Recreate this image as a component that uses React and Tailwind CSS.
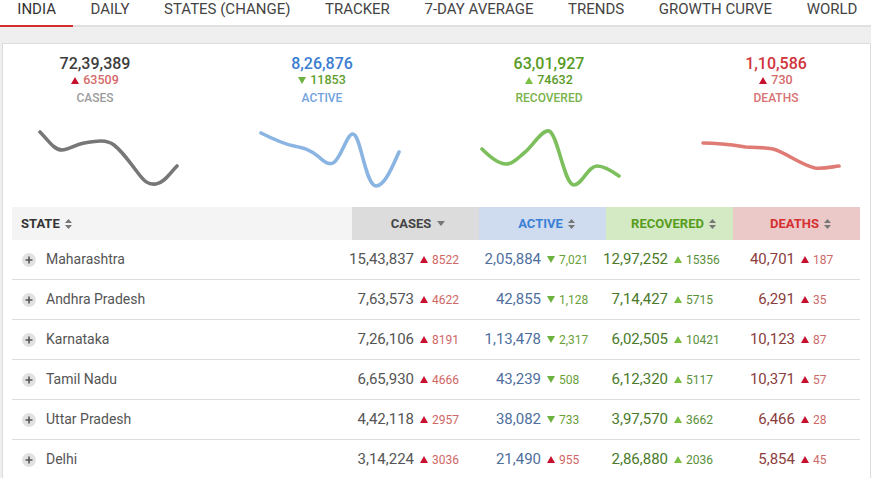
import React from 'react';

const tabs = ['INDIA', 'DAILY', 'STATES (CHANGE)', 'TRACKER', '7-DAY AVERAGE', 'TRENDS', 'GROWTH CURVE', 'WORLD'];

const summary = [
  { value: '72,39,389', delta: '63509', dir: 'up', label: 'CASES', num: 'text-[#3d3d3d]', tri: '#c8102e', dnum: 'text-[#d46a6a]', lab: 'text-[#9c9c9c]' },
  { value: '8,26,876', delta: '11853', dir: 'down', label: 'ACTIVE', num: 'text-[#3b7dd0]', tri: '#6cb33e', dnum: 'text-[#5f9e2c]', lab: 'text-[#72a2dc]' },
  { value: '63,01,927', delta: '74632', dir: 'up', label: 'RECOVERED', num: 'text-[#579a24]', tri: '#7ac143', dnum: 'text-[#5a9a2a]', lab: 'text-[#79b34a]' },
  { value: '1,10,586', delta: '730', dir: 'up', label: 'DEATHS', num: 'text-[#d1343b]', tri: '#c8102e', dnum: 'text-[#d46a6a]', lab: 'text-[#d87272]' }
];

const charts = [
  { color: '#777777', d: 'M2 7 C 10 15, 16 25, 24 25 C 30 25, 36 20, 46 18 C 58 16, 68 14, 76 20 C 86 28, 92 38, 100 48 C 106 56, 110 60, 118 59 C 126 58, 132 48, 139 41' },
  { color: '#8ab4e2', d: 'M2 8 C 12 13, 24 19, 35 21 C 45 23, 52 25, 60 32 C 66 38, 70 40, 74 38 C 82 34, 88 8, 94 9 C 102 10, 106 60, 117 61 C 126 61, 134 40, 140 27' },
  { color: '#7cbf5c', d: 'M2 24 C 8 30, 18 39, 26 39 C 33 39, 38 33, 44 28 C 52 22, 62 4, 69 6 C 78 9, 84 60, 94 60 C 102 60, 108 41, 117 41 C 124 41, 132 46, 139 51' },
  { color: '#e07a74', d: 'M2 18 C 20 18, 32 20, 45 22 C 55 23, 62 22, 72 24 C 84 27, 100 40, 114 43 C 122 44, 130 42, 138 41' }
];

const rows = [
  ['Maharashtra', '15,43,837', '8522', '2,05,884', '7,021', 'down', '12,97,252', '15356', '40,701', '187'],
  ['Andhra Pradesh', '7,63,573', '4622', '42,855', '1,128', 'down', '7,14,427', '5715', '6,291', '35'],
  ['Karnataka', '7,26,106', '8191', '1,13,478', '2,317', 'down', '6,02,505', '10421', '10,123', '87'],
  ['Tamil Nadu', '6,65,930', '4666', '43,239', '508', 'down', '6,12,320', '5117', '10,371', '57'],
  ['Uttar Pradesh', '4,42,118', '2957', '38,082', '733', 'down', '3,97,570', '3662', '6,466', '28'],
  ['Delhi', '3,14,224', '3036', '21,490', '955', 'up', '2,86,880', '2036', '5,854', '45']
];

function Tri({ dir, color, size = 8 }) {
  return (
    <svg width={size} height={size - 1} viewBox="0 0 8 7" className="shrink-0">
      {dir === 'up' ? <polygon points="4,0 8,7 0,7" fill={color} /> : <polygon points="0,0 8,0 4,7" fill={color} />}
    </svg>
  );
}

function SortIcon() {
  return (
    <svg width="7" height="10" viewBox="0 0 7 10" className="ml-[5px]">
      <polygon points="3.5,0 7,4 0,4" fill="#777" />
      <polygon points="0,6 7,6 3.5,10" fill="#777" />
    </svg>
  );
}

function NumCell({ value, delta, dir, numClass, triColor, deltaClass }) {
  return (
    <div className="flex items-center h-full">
      <div className={`w-[62px] shrink-0 flex justify-end whitespace-nowrap text-[15px] ${numClass}`}>{value}</div>
      <div className="flex items-center ml-[6px] whitespace-nowrap">
        <Tri dir={dir} color={triColor} />
        <span className={`ml-[4px] text-[12px] ${deltaClass}`}>{delta}</span>
      </div>
    </div>
  );
}

export default function App() {
  return (
    <div className="w-[874px] h-[478px] overflow-hidden bg-white" style={{ fontFamily: 'Roboto, "Liberation Sans", sans-serif' }}>
      {/* tabs */}
      <div className="flex w-[871px] border-b-2 border-[#e0e0e0]">
        {tabs.map((t, i) => (
          <div
            key={t}
            className={`-mb-[2px] px-[17.3px] pb-[7px] text-[15px] leading-[18px] whitespace-nowrap border-b-2 ${i === 0 ? 'border-[#d32f2f] text-[#333]' : 'border-transparent text-[#444]'}`}
          >
            {t}
          </div>
        ))}
      </div>

      <div className="w-[871px] bg-[#efefef] pl-[2px] pt-[16px]">
        <div className="w-[869px] bg-white border-t border-l border-r border-[#dddddd] h-[440px]">
          {/* summary */}
          <div className="grid grid-cols-[160px_160px_160px_160px] gap-x-[67px] pl-[12px] pt-[11px]">
            {summary.map((s) => (
              <div key={s.label} className="flex flex-col items-center">
                <div className={`text-[16px] leading-[18px] font-medium ${s.num}`}>{s.value}</div>
                <div className="flex items-center h-[14px]">
                  <Tri dir={s.dir} color={s.tri} />
                  <span className={`ml-[4px] text-[12.5px] font-medium ${s.dnum}`}>{s.delta}</span>
                </div>
                <div className={`mt-[3px] text-[12px] leading-[16px] font-medium ${s.lab}`}>{s.label}</div>
              </div>
            ))}
          </div>

          {/* sparklines */}
          <div className="flex gap-x-[76px] pl-[35px] mt-[19px]">
            {charts.map((c, i) => (
              <svg key={i} width="145" height="65" viewBox="0 0 145 65">
                <path d={c.d} fill="none" stroke={c.color} strokeWidth="3.6" strokeLinecap="round" strokeLinejoin="round" />
              </svg>
            ))}
          </div>

          {/* table */}
          <div className="ml-[9px] mt-[17px] w-[848px]">
            <div className="grid grid-cols-[340px_127px_127px_127px_127px] h-[33px] text-[13px] font-bold">
              <div className="flex items-center pl-[9px] bg-[#f4f4f4] text-[#333]">
                STATE
                <SortIcon />
              </div>
              <div className="flex items-center justify-center pl-[5px] bg-[#dcdcdc] text-[#444]">
                CASES
                <svg width="8" height="5" viewBox="0 0 8 5" className="ml-[6px]">
                  <polygon points="0,0 8,0 4,5" fill="#777" />
                </svg>
              </div>
              <div className="flex items-center justify-center pl-[8px] bg-[#cfdcf0] text-[#3a7fd6]">
                ACTIVE
                <SortIcon />
              </div>
              <div className="flex items-center justify-center pl-[8px] bg-[#d3eac5] text-[#589c1c]">
                RECOVERED
                <SortIcon />
              </div>
              <div className="flex items-center justify-center pl-[8px] bg-[#ebc9c9] text-[#d63031]">
                DEATHS
                <SortIcon />
              </div>
            </div>

            {rows.map((r) => (
              <div key={r[0]} className="grid grid-cols-[340px_127px_127px_127px_127px] h-[40px] border-b border-[#dddddd]">
                <div className="flex items-center pl-[10px]">
                  <div className="w-[14px] h-[14px] rounded-full bg-[#e2e2e2] flex items-center justify-center">
                    <svg width="8" height="8" viewBox="0 0 8 8">
                      <path d="M4 0.5 V7.5 M0.5 4 H7.5" stroke="#555" strokeWidth="1.6" />
                    </svg>
                  </div>
                  <span className="ml-[10px] text-[14px] text-[#555]">{r[0]}</span>
                </div>
                <NumCell value={r[1]} delta={r[2]} dir="up" numClass="text-[#555]" triColor="#c8102e" deltaClass="text-[#d06666]" />
                <NumCell
                  value={r[3]}
                  delta={r[4]}
                  dir={r[5]}
                  numClass="text-[#4f6f9e]"
                  triColor={r[5] === 'up' ? '#c8102e' : '#6cb33e'}
                  deltaClass={r[5] === 'up' ? 'text-[#d06666]' : 'text-[#6a9f3a]'}
                />
                <NumCell value={r[6]} delta={r[7]} dir="up" numClass="text-[#4a7a2a]" triColor="#7ac143" deltaClass="text-[#5a8f3a]" />
                <NumCell value={r[8]} delta={r[9]} dir="up" numClass="text-[#8b3d3d]" triColor="#c8102e" deltaClass="text-[#cc6a6a]" />
              </div>
            ))}
          </div>
        </div>
      </div>
    </div>
  );
}
